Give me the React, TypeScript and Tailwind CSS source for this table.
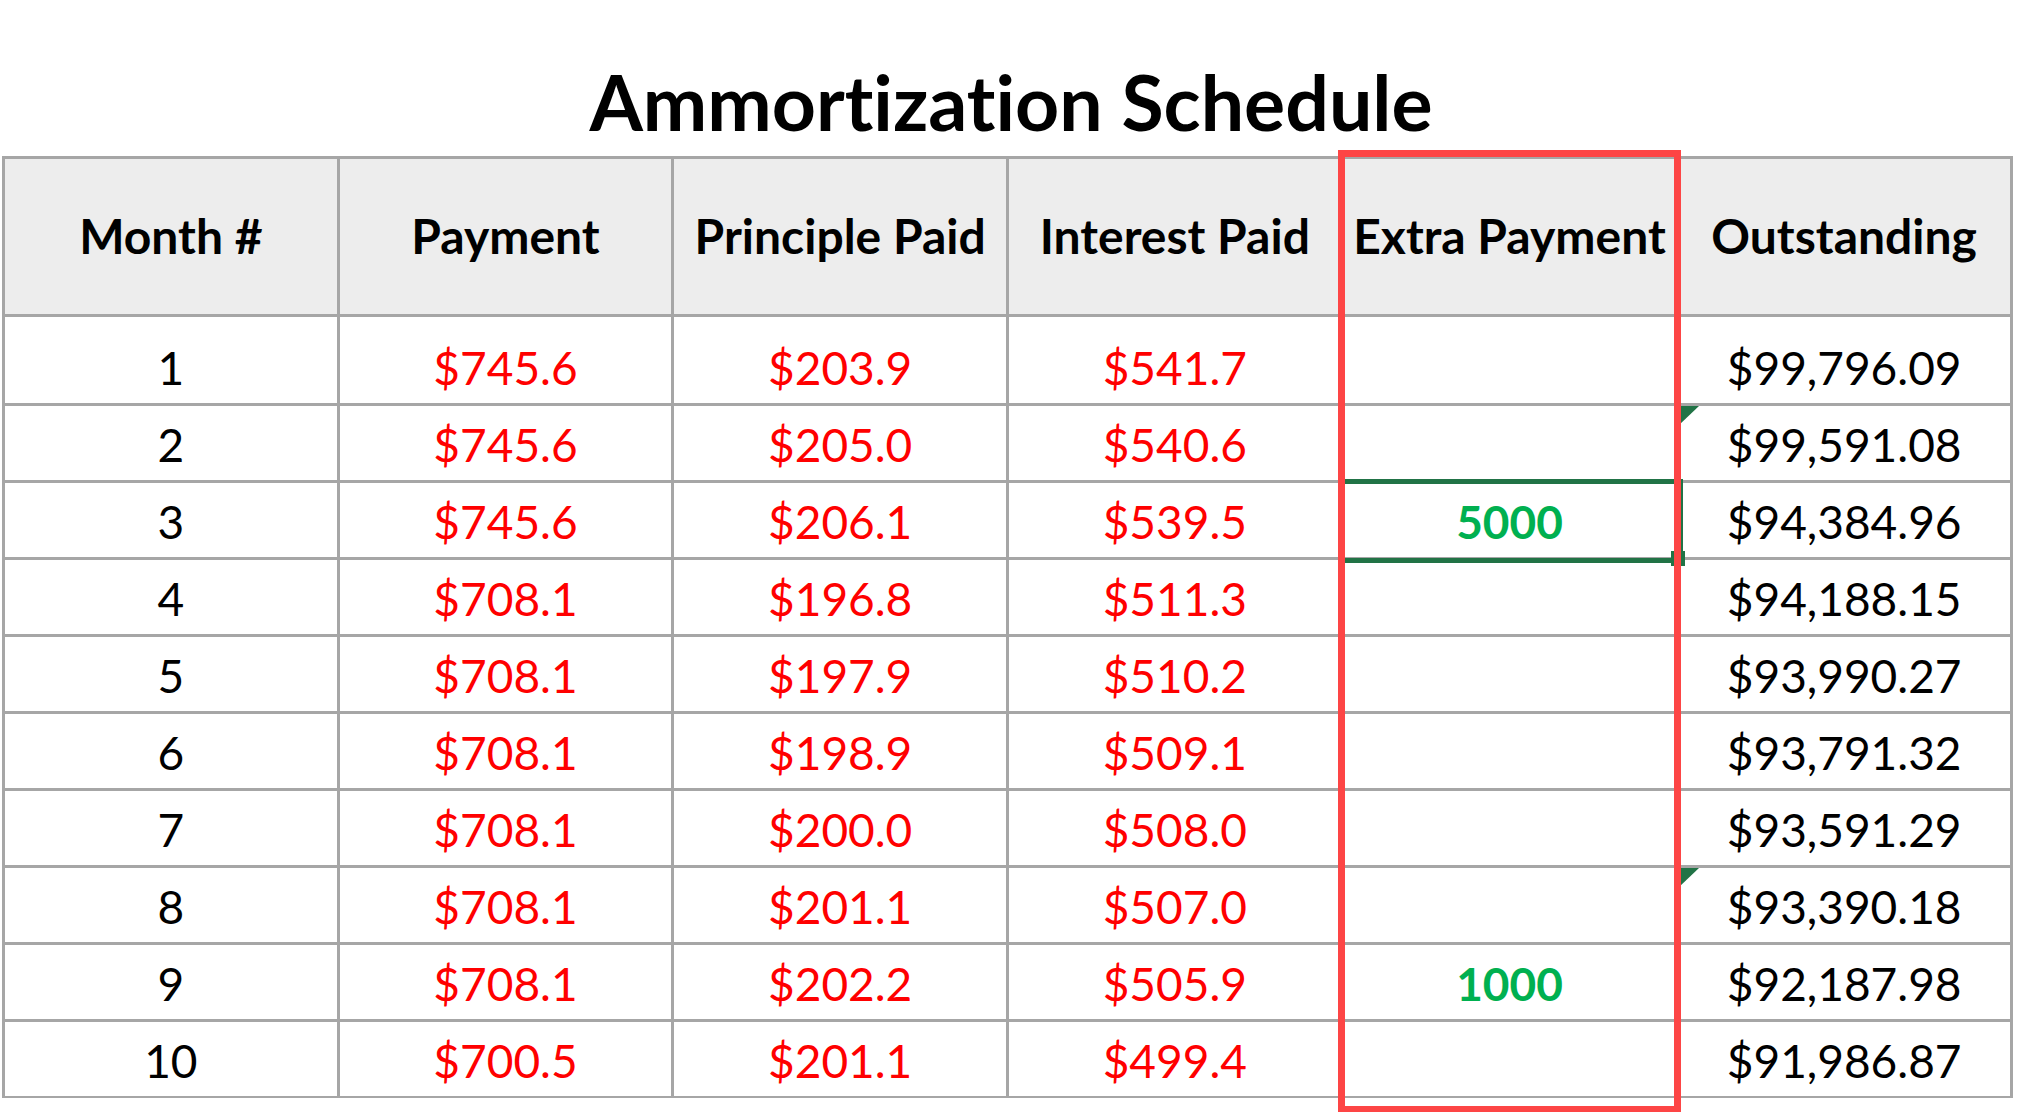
import React from "react";

const rows: [string, string, string, string, string, string][] = [
  ["1", "$745.6", "$203.9", "$541.7", "", "$99,796.09"],
  ["2", "$745.6", "$205.0", "$540.6", "", "$99,591.08"],
  ["3", "$745.6", "$206.1", "$539.5", "5000", "$94,384.96"],
  ["4", "$708.1", "$196.8", "$511.3", "", "$94,188.15"],
  ["5", "$708.1", "$197.9", "$510.2", "", "$93,990.27"],
  ["6", "$708.1", "$198.9", "$509.1", "", "$93,791.32"],
  ["7", "$708.1", "$200.0", "$508.0", "", "$93,591.29"],
  ["8", "$708.1", "$201.1", "$507.0", "", "$93,390.18"],
  ["9", "$708.1", "$202.2", "$505.9", "1000", "$92,187.98"],
  ["10", "$700.5", "$201.1", "$499.4", "", "$91,986.87"],
];

const headers = ["Month #", "Payment", "Principle Paid", "Interest Paid", "Extra Payment", "Outstanding"];

function Triangle() {
  return (
    <svg className="absolute left-0 top-0" width="21" height="20" viewBox="0 0 21 20">
      <polygon points="0,0 21,0 0,20" fill="#217346" />
    </svg>
  );
}

function Selection() {
  return (
    <>
      <div className="absolute z-10 -left-[5px] -right-[8px] -top-[4px] -bottom-[6px] border-[5px] border-[#217346]" />
      <div className="absolute z-10 -right-[10px] -bottom-[9px] w-[14px] h-[15px] bg-[#217346]" />
    </>
  );
}

export default function App() {
  return (
    <div
      className="relative w-[2020px] h-[1112px] bg-white overflow-hidden [font-variant-ligatures:none]"
      style={{ fontFamily: "Lato, 'Open Sans', sans-serif" }}
    >
      <div className="h-[156px] pt-[63px] flex justify-center">
        <div className="w-[2011px] ml-[2px] text-center text-[77px] leading-none font-bold text-black">
          Ammortization Schedule
        </div>
      </div>
      <div className="relative ml-[2px] w-[2011px]">
        <div className="bg-[#a6a6a6] p-[3px] pb-[2px] grid grid-cols-6 gap-[3px]">
          {headers.map((h) => (
            <div
              key={h}
              className="h-[155px] bg-[#ededed] flex items-center justify-center pb-[2px] text-[48px] font-bold text-black leading-none whitespace-nowrap"
            >
              {h}
            </div>
          ))}
          {rows.map((r, ri) =>
            r.map((c, ci) => (
              <div
                key={`${ri}-${ci}`}
                className={`relative bg-white flex items-end justify-center pb-[12px] text-[46px] leading-none whitespace-nowrap ${
                  ri === 0 ? "h-[86px]" : "h-[74px]"
                } ${ci === 0 || ci === 5 ? "text-black" : ""} ${ci >= 1 && ci <= 3 ? "text-[#ff0000]" : ""} ${
                  ci === 4 ? "text-[#00b050] font-bold" : ""
                }`}
              >
                {ci === 5 && (ri === 1 || ri === 7) ? <Triangle /> : null}
                {ci === 4 && ri === 2 ? <Selection /> : null}
                {c}
              </div>
            ))
          )}
        </div>
        {/* Red highlight box around the Extra Payment column */}
        <div className="absolute z-20 left-[1336px] -top-[6px] w-[343px] -bottom-[15px] border-[7px] border-[#fd4545]" />
      </div>
    </div>
  );
}
